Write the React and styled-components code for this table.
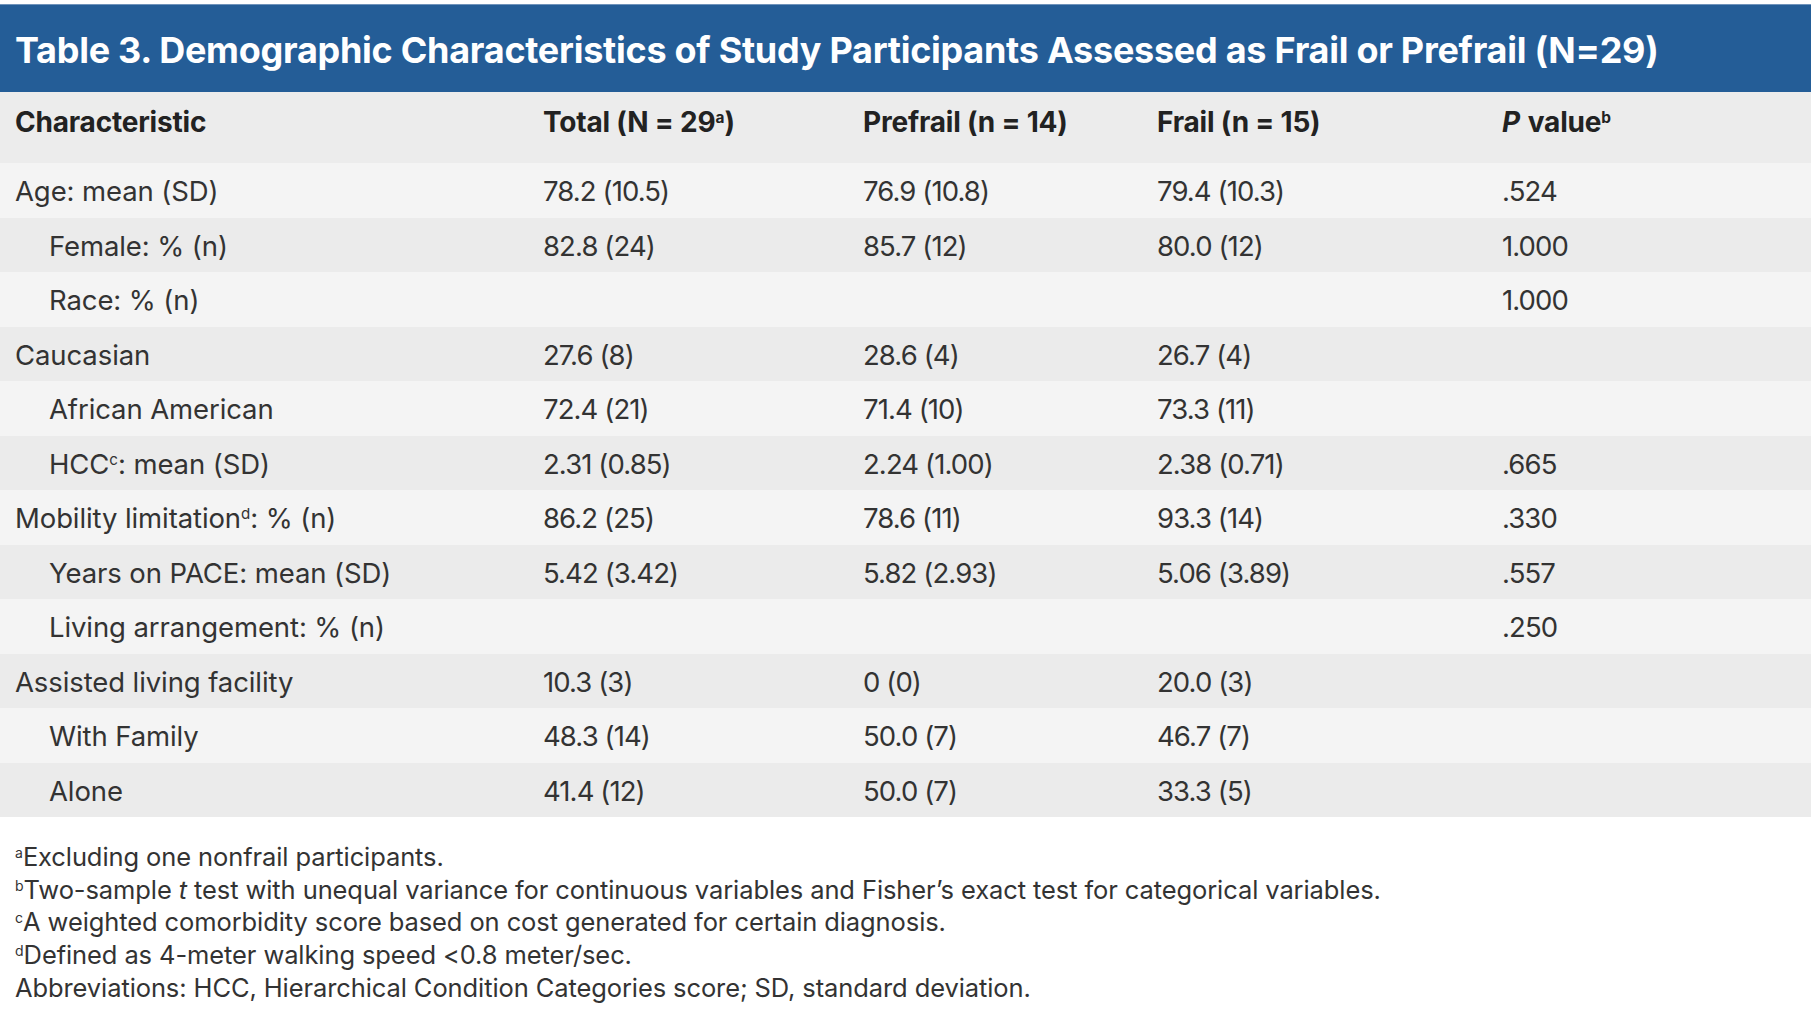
import React from "react";
import styled, { createGlobalStyle } from "styled-components";

const Global = createGlobalStyle`
  html, body { margin: 0; padding: 0; background: #ffffff; }
  body { font-family: Inter, "Noto Sans", sans-serif; color: #2d2d2d; }
`;

const Page = styled.div`
  padding: 4px 3px 0 0;
`;

const TitleBar = styled.div`
  background: #245d97;
  height: 88px;
  display: flex;
  align-items: center;
  padding-left: 15px;
  border-top: 1px solid #6f93bb;
  box-sizing: border-box;
`;

const Title = styled.h1`
  margin: 0;
  font-family: Inter, sans-serif;
  font-weight: 700;
  font-size: 36px;
  color: #ffffff;
  letter-spacing: -0.27px;
  line-height: 1;
  padding-top: 3px;
`;

const Grid = styled.div`
  display: grid;
  grid-template-columns: 543px 320px 294px 345px 1fr;
`;

const Row = styled.div`
  display: contents;
`;

const Cell = styled.div`
  background: ${(p) => p.$bg};
  height: ${(p) => p.$h}px;
  display: flex;
  align-items: ${(p) => (p.$head ? "flex-start" : "center")};
  padding-top: ${(p) => (p.$head ? "13px" : "2px")};
  padding-left: ${(p) => p.$pl}px;
  box-sizing: border-box;
  font-size: ${(p) => (p.$head ? 28 : 27.5)}px;
  font-weight: ${(p) => (p.$head ? 700 : 400)};
  color: ${(p) => (p.$head ? "#222" : "#333")};
  letter-spacing: ${(p) => (p.$head ? "-0.2px" : p.$num ? "-0.9px" : "-0.1px")};
  white-space: nowrap;
`;

const Text = styled.span`
  display: inline-block;
`;

const Sup = styled.sup`
  font-size: 0.55em;
  vertical-align: 0.6em;
  line-height: 0;
  font-weight: inherit;
  letter-spacing: 0;
`;

const Ital = styled.i`
  margin-right: 0.05em;
`;

const Notes = styled.div`
  padding: 24px 0 0 15px;
  font-size: 25.5px;
  line-height: 32.7px;
  color: #333;
  letter-spacing: -0.1px;
`;

const Note = styled.div``;

const rows = [
  { label: "Age: mean (SD)", indent: false, v: ["78.2 (10.5)", "76.9 (10.8)", "79.4 (10.3)", ".524"] },
  { label: "Female: % (n)", indent: true, v: ["82.8 (24)", "85.7 (12)", "80.0 (12)", "1.000"] },
  { label: "Race: % (n)", indent: true, v: ["", "", "", "1.000"] },
  { label: "Caucasian", indent: false, v: ["27.6 (8)", "28.6 (4)", "26.7 (4)", ""] },
  { label: "African American", indent: true, v: ["72.4 (21)", "71.4 (10)", "73.3 (11)", ""] },
  { label: <>HCC<Sup>c</Sup>: mean (SD)</>, indent: true, v: ["2.31 (0.85)", "2.24 (1.00)", "2.38 (0.71)", ".665"] },
  { label: <>Mobility limitation<Sup>d</Sup>: % (n)</>, indent: false, v: ["86.2 (25)", "78.6 (11)", "93.3 (14)", ".330"] },
  { label: "Years on PACE: mean (SD)", indent: true, v: ["5.42 (3.42)", "5.82 (2.93)", "5.06 (3.89)", ".557"] },
  { label: "Living arrangement: % (n)", indent: true, v: ["", "", "", ".250"] },
  { label: "Assisted living facility", indent: false, v: ["10.3 (3)", "0 (0)", "20.0 (3)", ""] },
  { label: "With Family", indent: true, v: ["48.3 (14)", "50.0 (7)", "46.7 (7)", ""] },
  { label: "Alone", indent: true, v: ["41.4 (12)", "50.0 (7)", "33.3 (5)", ""] },
];

const heads = [
  "Characteristic",
  <>Total (N = 29<Sup>a</Sup>)</>,
  "Prefrail (n = 14)",
  "Frail (n = 15)",
  <><Ital>P</Ital> value<Sup>b</Sup></>,
];

export default function App() {
  return (
    <Page>
      <Global />
      <TitleBar>
        <Title>Table 3. Demographic Characteristics of Study Participants Assessed as Frail or Prefrail (N=29)</Title>
      </TitleBar>
      <Grid>
        <Row>
          {heads.map((h, i) => (
            <Cell key={i} $head $bg="#ececec" $h={71} $pl={i === 0 ? 15 : 0}>
              <Text>{h}</Text>
            </Cell>
          ))}
        </Row>
        {rows.map((r, ri) => {
          const bg = ri % 2 === 0 ? "#f4f4f4" : "#ebebeb";
          return (
            <Row key={ri}>
              <Cell $bg={bg} $h={54.5} $pl={r.indent ? 49 : 15}>
                <Text>{r.label}</Text>
              </Cell>
              {r.v.map((v, ci) => (
                <Cell key={ci} $num $bg={bg} $h={54.5} $pl={0}>
                  <Text>{v}</Text>
                </Cell>
              ))}
            </Row>
          );
        })}
      </Grid>
      <Notes>
        <Note><Sup>a</Sup>Excluding one nonfrail participants.</Note>
        <Note><Sup>b</Sup>Two-sample <i>t</i> test with unequal variance for continuous variables and Fisher’s exact test for categorical variables.</Note>
        <Note><Sup>c</Sup>A weighted comorbidity score based on cost generated for certain diagnosis.</Note>
        <Note><Sup>d</Sup>Defined as 4-meter walking speed &lt;0.8 meter/sec.</Note>
        <Note>Abbreviations: HCC, Hierarchical Condition Categories score; SD, standard deviation.</Note>
      </Notes>
    </Page>
  );
}
